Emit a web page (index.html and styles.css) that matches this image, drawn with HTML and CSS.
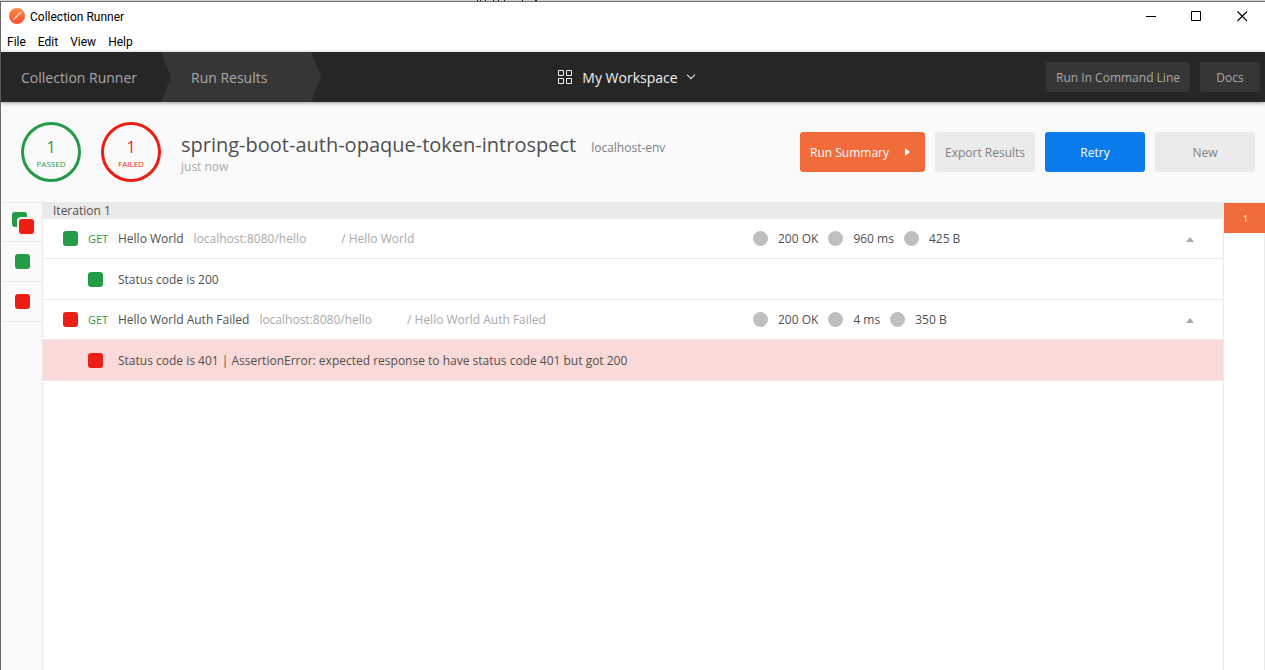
FILE: index.html
```html
<!DOCTYPE html>
<html lang="en">
<head>
<meta charset="utf-8">
<title>Collection Runner</title>
<link rel="stylesheet" href="styles.css">
</head>
<body>
<div class="top-edge">
  <svg width="64" height="1" viewBox="0 0 64 1" aria-hidden="true"><path d="M1 0h1v1h-1zM4 0h1v1h-1zM9 0h1v1h-1zM17 0h1v1h-1zM22 0h1v1h-1zM28 0h1v1h-1zM46 0h1v1h-1zM59 0h2v1h-2z" fill="#222"/></svg>
</div>
<div class="window">
  <header class="titlebar">
    <svg class="logo" width="16" height="16" viewBox="0 0 16 16" aria-hidden="true">
      <defs><linearGradient id="logo-fill" x1="0" y1="0" x2="0" y2="1"><stop offset="0" stop-color="#ff8a4a"/><stop offset="1" stop-color="#fa4f2e"/></linearGradient></defs>
      <circle cx="8" cy="8" r="8" fill="url(#logo-fill)"/>
      <path d="M5.500 9.600 10 5.100 11 6.100 6.600 10.400z" fill="#ffd3c0"/>
      <path d="M3.600 12.400 5.600 9.800 6.600 10.500z" fill="#fff"/>
      <path d="M10.200 4.900 12.600 3.200 12.400 4.600 11.100 6z" fill="#fff"/>
    </svg>
    <span class="window-title">Collection Runner</span>
    <div class="window-controls">
      <button class="window-button" aria-label="Minimize"><svg width="11" height="11" viewBox="0 0 11 11"><path d="M1 5.500h10" stroke="#000"/></svg></button>
      <button class="window-button" aria-label="Maximize"><svg width="11" height="11" viewBox="0 0 11 11"><path d="M.5.5h9v9h-9z" fill="none" stroke="#000"/></svg></button>
      <button class="window-button" aria-label="Close"><svg width="11" height="11" viewBox="0 0 11 11"><path d="M.5.5l9.500 9.500M10 .5.5 10" stroke="#000" stroke-width="1.100"/></svg></button>
    </div>
  </header>
  <nav class="menubar">
    <button>File</button><button>Edit</button><button>View</button><button>Help</button>
  </nav>
  <nav class="navbar">
    <div class="crumbs">
      <a class="crumb crumb-home" href="#">Collection Runner</a>
      <a class="crumb crumb-current" href="#">Run Results</a>
    </div>
    <button class="workspace">
      <svg width="14" height="14" viewBox="0 0 14 14" fill="none" stroke="#f0f0f0"><path d="M.5.5h5v5h-5zM8.500.5h5v5h-5zM.5 8.500h5v5h-5zM8.500 8.500h5v5h-5z"/></svg>
      <span class="workspace-name">My Workspace</span>
      <svg width="10" height="6" viewBox="0 0 10 6" fill="none" stroke="#e0e0e0" stroke-width="1.100"><path d="M1 .7l4 4 4-4"/></svg>
    </button>
    <div class="nav-actions">
      <button class="nav-button">Run In Command Line</button>
      <button class="nav-button nav-docs">Docs</button>
    </div>
  </nav>
  <section class="summary">
    <div class="score passed"><span class="count">1</span><span class="caption">PASSED</span></div>
    <div class="score failed"><span class="count">1</span><span class="caption">FAILED</span></div>
    <div class="run-info">
      <div class="run-heading"><h1>spring-boot-auth-opaque-token-introspect</h1><span class="environment">localhost-env</span></div>
      <div class="run-time">just now</div>
    </div>
    <div class="run-actions">
      <button class="action action-summary"><span>Run Summary</span><svg width="5" height="8" viewBox="0 0 5 8"><path d="M0 0l5 4-5 4z" fill="#fff"/></svg></button>
      <button class="action">Export Results</button>
      <button class="action action-retry">Retry</button>
      <button class="action">New</button>
    </div>
  </section>
  <main class="results">
    <aside class="filters">
      <button class="filter filter-all" aria-label="All tests"><svg width="24" height="24" viewBox="0 0 24 24"><rect width="15" height="15" rx="3" fill="#249c47"/><rect x="5" y="5" width="19" height="19" rx="4" fill="#f0f0f0"/><rect x="7" y="7" width="15" height="15" rx="3" fill="#ed1f14"/></svg></button>
      <button class="filter" aria-label="Passed tests"><span class="mark pass"></span></button>
      <button class="filter" aria-label="Failed tests"><span class="mark fail"></span></button>
    </aside>
    <section class="list">
      <h2 class="iteration">Iteration 1</h2>
      <div class="request">
        <span class="mark pass"></span><span class="method">GET</span><span class="name">Hello World</span><span class="url">localhost:8080/hello</span><span class="path">/ Hello World</span>
        <div class="stats"><span class="stat">200 OK</span><span class="stat">960 ms</span><span class="stat">425 B</span></div>
        <button class="toggle" aria-label="Collapse"><svg width="8" height="5" viewBox="0 0 8 5"><path d="M0 5 4 0l4 5z" fill="#aaa"/></svg></button>
      </div>
      <div class="test"><span class="mark pass"></span><span class="test-text">Status code is 200</span></div>
      <div class="request">
        <span class="mark fail"></span><span class="method">GET</span><span class="name">Hello World Auth Failed</span><span class="url">localhost:8080/hello</span><span class="path">/ Hello World Auth Failed</span>
        <div class="stats"><span class="stat">200 OK</span><span class="stat">4 ms</span><span class="stat">350 B</span></div>
        <button class="toggle" aria-label="Collapse"><svg width="8" height="5" viewBox="0 0 8 5"><path d="M0 5 4 0l4 5z" fill="#aaa"/></svg></button>
      </div>
      <div class="test test-failed"><span class="mark fail"></span><span class="test-text">Status code is 401 | AssertionError: expected response to have status code 401 but got 200</span></div>
    </section>
    <aside class="iterations"><button class="iteration-tab">1</button></aside>
  </main>
</div>
</body>
</html>
```
FILE: styles.css
```css
* { box-sizing: border-box; }
body {
  margin: 0;
  min-height: 100vh;
  display: flex;
  flex-direction: column;
  background: #fff;
  color: #505050;
  font: 12px/18px "Open Sans", "Noto Sans", sans-serif;
}
button {
  margin: 0;
  padding: 0;
  border: 0;
  background: none;
  color: inherit;
  font: inherit;
}
a { color: inherit; text-decoration: none; }
svg { display: block; flex: none; }
.top-edge { height: 1px; padding-left: 476px; background: #d4d4d4; overflow: hidden; }
.window {
  flex: 1;
  display: flex;
  flex-direction: column;
  border: solid #6b6b6b;
  border-width: 1px 0 0 1px;
}

.titlebar { display: flex; align-items: center; height: 30px; padding-left: 8px; color: #000; }
.logo { margin-bottom: 2px; }
.window-title { margin-left: 5px; font-family: Roboto, sans-serif; }
.window-controls { display: flex; margin-left: auto; height: 100%; }
.window-button { display: flex; align-items: center; justify-content: center; width: 46px; padding-bottom: 2px; }
.menubar { display: flex; gap: 12px; height: 20px; padding-left: 6px; color: #000; }
.menubar button { font-family: Roboto, sans-serif; }

.navbar {
  position: relative;
  z-index: 1;
  display: grid;
  grid-template-columns: 1fr auto 1fr;
  align-items: center;
  height: 50px;
  background: #262626;
  box-shadow: 0 1px 4px rgba(0, 0, 0, .4);
}
.crumbs { display: flex; height: 100%; color: #a9a9a9; font-size: 14px; }
.crumb { display: flex; align-items: center; padding-top: 2px; }
.crumb-home { width: 160px; padding-left: 20px; white-space: nowrap; }
.crumb-current {
  width: 160px;
  padding-left: 30px;
  background: #363636;
  clip-path: polygon(0 0, 150px 0, 100% 50%, 150px 100%, 0 100%, 10px 50%);
}
.workspace { display: flex; align-items: center; padding-right: 12px; color: #f0f0f0; font-size: 14px; font-weight: 500; }
.workspace-name { padding: 2px 8px 0 10px; }
.nav-actions { display: flex; justify-content: flex-end; gap: 10px; padding-right: 5px; }
.nav-button { height: 30px; padding: 2px 10px 0; border-radius: 3px; background: #363636; color: #a9a9a9; }
.nav-docs { width: 60px; }

.summary { display: flex; align-items: center; height: 100px; padding: 0 10px 0 20px; background: #fafafa; }
.score {
  display: flex;
  flex-direction: column;
  align-items: center;
  width: 60px;
  height: 60px;
  margin-right: 20px;
  padding-top: 12px;
  border: 3px solid;
  border-radius: 50%;
}
.passed { color: #249c47; }
.failed { color: #ed1f14; }
.count { font-size: 16px; line-height: 20px; }
.caption { font-size: 8px; line-height: 14px; }
.run-info { padding-top: 4px; }
.run-heading { display: flex; align-items: baseline; gap: 15px; }
h1 { margin: 0; font-size: 20px; font-weight: 400; line-height: 26px; }
.environment { color: #808080; }
.run-time { color: #a9a9a9; }
.run-actions { display: flex; gap: 10px; margin-left: auto; }
.action { width: 100px; height: 40px; padding-top: 2px; border-radius: 3px; background: #ebebeb; color: #808080; }
.action-summary {
  display: flex;
  align-items: center;
  justify-content: space-between;
  width: 125px;
  padding: 0 15px 0 10px;
  background: #f26b3a;
  color: #fff;
  font-weight: 500;
}
.action-summary span { padding-top: 2px; }
.action-retry { background: #097bed; color: #fff; font-weight: 500; }

.results { flex: 1; display: flex; border-top: 1px solid #eaeaea; }
.filters { width: 42px; border-right: 1px solid #eaeaea; background: #fafafa; }
.filter {
  display: flex;
  align-items: center;
  justify-content: center;
  width: 100%;
  height: 40px;
  padding-left: 2px;
  border-bottom: 1px solid #eaeaea;
}
.filter-all { height: 39px; padding: 4px 0 0 4px; }
.mark { flex: none; width: 15px; height: 15px; border-radius: 3px; }
.pass { background: #249c47; }
.fail { background: #ed1f14; }
.list { flex: 1; min-width: 0; }
.iteration { margin: 0; padding-left: 10px; background: #eaeaea; font-size: 12px; font-weight: 400; line-height: 16px; }
.request, .test { display: flex; align-items: center; gap: 10px; border-bottom: 1px solid #eaeaea; }
.request { position: relative; height: 40px; padding: 0 29px 0 20px; }
.test { height: 41px; gap: 15px; padding-left: 45px; }
.test-text { padding-top: 2px; }
.test-failed { background: #fadad8; }
.method { width: 20px; color: #249c47; font-size: 11px; }
.url, .path { color: #a9a9a9; }
.path { margin-left: 25px; }
.stats { position: absolute; left: 60%; display: flex; gap: 10px; padding-left: 2px; }
.stat { display: flex; align-items: center; gap: 10px; }
.stat::before { content: ""; width: 15px; height: 15px; border-radius: 50%; background: #bfbfbf; }
.toggle { margin-left: auto; padding-top: 2px; }
.iterations { width: 42px; border: solid #eaeaea; border-width: 0 1px; }
.iteration-tab { width: calc(100% + 1px); height: 30px; padding: 2px 0 0 2px; background: #f26b3a; color: #fff; font-size: 9px; }
```
